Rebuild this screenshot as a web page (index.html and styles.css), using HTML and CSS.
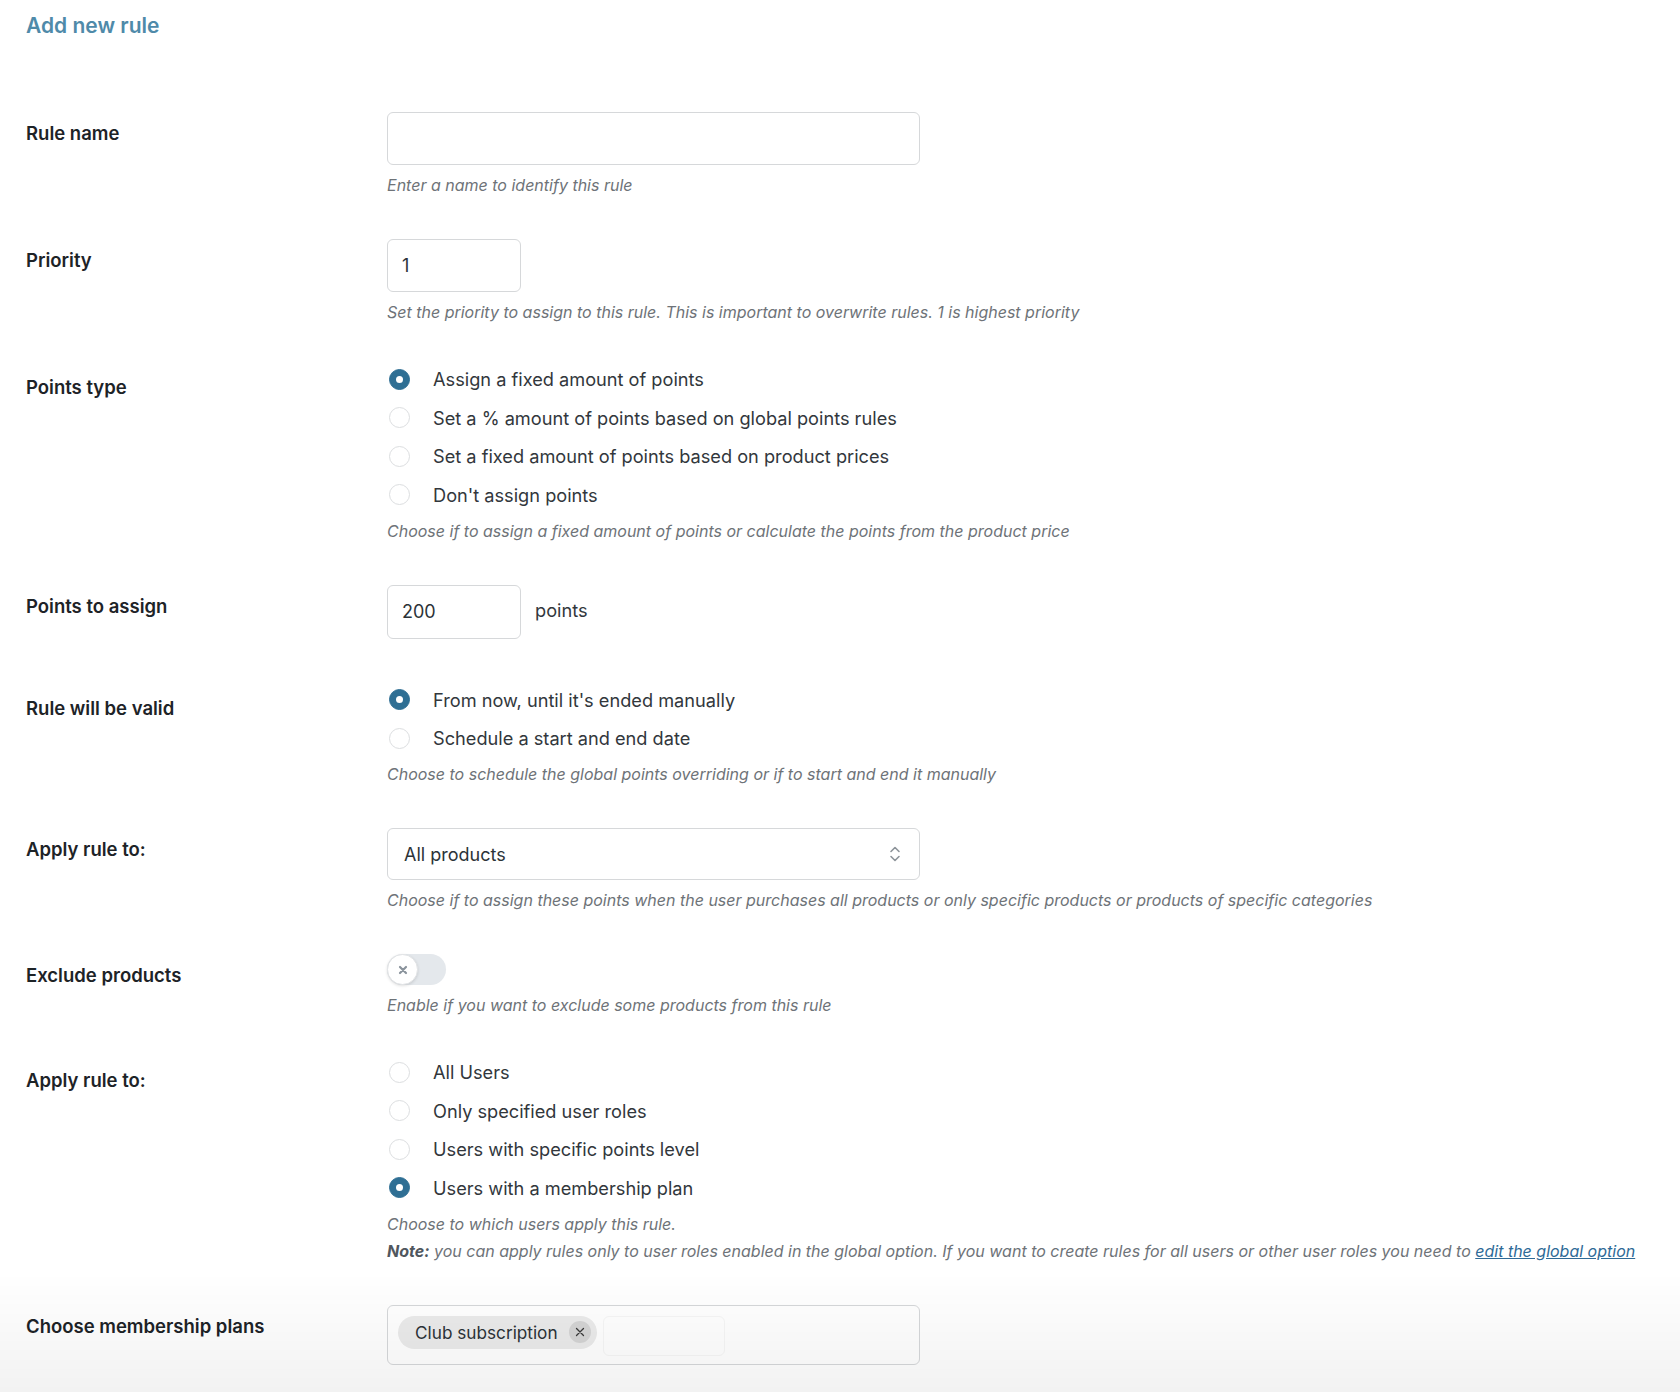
FILE: index.html
```html
<!DOCTYPE html>
<html lang="en">
<head>
<meta charset="utf-8">
<title>Add new rule</title>
<link rel="stylesheet" href="styles.css">
</head>
<body>
<div class="page">
  <h1 class="title">Add new rule</h1>

  <div class="form">
    <div class="row">
      <div class="label">Rule name</div>
      <div class="field">
        <div class="input wide"></div>
        <p class="help">Enter a name to identify this rule</p>
      </div>
    </div>

    <div class="row">
      <div class="label">Priority</div>
      <div class="field">
        <div class="input small">1</div>
        <p class="help">Set the priority to assign to this rule. This is important to overwrite rules. 1 is highest priority</p>
      </div>
    </div>

    <div class="row">
      <div class="label">Points type</div>
      <div class="field">
        <ul class="radios">
          <li class="radio-item"><span class="radio checked"></span>Assign a fixed amount of points</li>
          <li class="radio-item"><span class="radio"></span>Set a % amount of points based on global points rules</li>
          <li class="radio-item"><span class="radio"></span>Set a fixed amount of points based on product prices</li>
          <li class="radio-item"><span class="radio"></span>Don't assign points</li>
        </ul>
        <p class="help help-after-radios">Choose if to assign a fixed amount of points or calculate the points from the product price</p>
      </div>
    </div>

    <div class="row">
      <div class="label">Points to assign</div>
      <div class="field">
        <div class="inline">
          <div class="input small">200</div>
          <span class="suffix">points</span>
        </div>
      </div>
    </div>

    <div class="row">
      <div class="label">Rule will be valid</div>
      <div class="field">
        <ul class="radios">
          <li class="radio-item"><span class="radio checked"></span>From now, until it's ended manually</li>
          <li class="radio-item"><span class="radio"></span>Schedule a start and end date</li>
        </ul>
        <p class="help help-after-radios">Choose to schedule the global points overriding or if to start and end it manually</p>
      </div>
    </div>

    <div class="row">
      <div class="label">Apply rule to:</div>
      <div class="field">
        <div class="input wide select">
          <span>All products</span>
          <svg class="select-arrows" width="12" height="18" viewBox="0 0 12 18" aria-hidden="true">
            <path d="M2 6.5 L6 2.5 L10 6.5" fill="none" stroke="#8c9399" stroke-width="1.6" stroke-linecap="round" stroke-linejoin="round"/>
            <path d="M2 11.5 L6 15.5 L10 11.5" fill="none" stroke="#8c9399" stroke-width="1.6" stroke-linecap="round" stroke-linejoin="round"/>
          </svg>
        </div>
        <p class="help">Choose if to assign these points when the user purchases all products or only specific products or products of specific categories</p>
      </div>
    </div>

    <div class="row">
      <div class="label">Exclude products</div>
      <div class="field">
        <div class="toggle">
          <span class="knob">
            <svg width="10" height="10" viewBox="0 0 10 10" aria-hidden="true">
              <path d="M2 2 L8 8 M8 2 L2 8" stroke="#8a939c" stroke-width="2.2" stroke-linecap="round"/>
            </svg>
          </span>
        </div>
        <p class="help">Enable if you want to exclude some products from this rule</p>
      </div>
    </div>

    <div class="row">
      <div class="label">Apply rule to:</div>
      <div class="field">
        <ul class="radios">
          <li class="radio-item"><span class="radio"></span>All Users</li>
          <li class="radio-item"><span class="radio"></span>Only specified user roles</li>
          <li class="radio-item"><span class="radio"></span>Users with specific points level</li>
          <li class="radio-item"><span class="radio checked"></span>Users with a membership plan</li>
        </ul>
        <p class="help help-after-radios">Choose to which users apply this rule.</p>
        <p class="help help-note"><b>Note:</b> you can apply rules only to user roles enabled in the global option. If you want to create rules for all users or other user roles you need to <a href="#" class="link">edit the global option</a></p>
      </div>
    </div>

    <div class="row">
      <div class="label">Choose membership plans</div>
      <div class="field">
        <div class="input wide multi">
          <span class="chip">Club subscription<span class="chip-x">
            <svg width="10" height="10" viewBox="0 0 10 10" aria-hidden="true">
              <path d="M1.5 1.5 L8.5 8.5 M8.5 1.5 L1.5 8.5" stroke="#3a3a3a" stroke-width="1.3" stroke-linecap="round"/>
            </svg>
          </span></span>
          <span class="search"></span>
        </div>
      </div>
    </div>
  </div>
</div>
<div class="bottom-fade"></div>
</body>
</html>
```

FILE: styles.css
```css
* { box-sizing: border-box; }

html, body {
  margin: 0;
  padding: 0;
  background: #ffffff;
}

body {
  font-family: Inter, "Noto Sans", "Liberation Sans", sans-serif;
  color: #2c3338;
  min-height: 1392px;
}

.page {
  padding: 13px 26px 0 26px;
}

.title {
  margin: 0;
  font-size: 21px;
  line-height: 26px;
  font-weight: 600;
  color: #4f8aa9;
}

.form {
  margin-top: 73px;
}

.row {
  display: flex;
  align-items: flex-start;
  margin-bottom: 44px;
}

.label {
  width: 361px;
  flex: none;
  padding-top: 10px;
  font-size: 18.5px;
  line-height: 22px;
  font-weight: 600;
  color: #1d2327;
}

.field {
  flex: 1;
}

.input {
  height: 53px;
  border: 1px solid #d6d8da;
  border-radius: 6px;
  background: #fff;
  font-size: 18px;
  color: #2c3338;
  display: flex;
  align-items: center;
  padding: 0 14px;
}

.input.wide { width: 533px; }
.input.small { width: 134px; }

.help {
  margin: 10px 0 0 0;
  font-size: 16px;
  line-height: 20px;
  font-style: italic;
  color: #6e7378;
}

.help-after-radios { margin-top: 12px; }
.help-note { margin-top: 7px; }
.help b { font-weight: 700; color: #50575e; }

.link {
  color: #2e6a97;
  text-decoration: underline;
}

.radios {
  list-style: none;
  margin: -1px 0 0 0;
  padding: 0;
  display: flex;
  flex-direction: column;
  gap: 10.5px;
}

.radio-item {
  display: flex;
  align-items: center;
  height: 28px;
  font-size: 18.2px;
  color: #32373c;
  padding-left: 2px;
}

.radio {
  width: 21px;
  height: 21px;
  border-radius: 50%;
  border: 1px solid #dcdee0;
  background: #fff;
  margin-right: 23px;
  flex: none;
  display: flex;
  align-items: center;
  justify-content: center;
}

.radio.checked {
  background: #2f6f94;
  border-color: #2f6f94;
}

.radio.checked::after {
  content: "";
  width: 7px;
  height: 7px;
  border-radius: 50%;
  background: #fff;
}

.inline {
  display: flex;
  align-items: center;
  margin-bottom: 4px;
}

.inline .input { height: 54px; }

.suffix {
  margin-left: 14px;
  font-size: 18.2px;
  color: #32373c;
  padding-bottom: 3px;
}

.select {
  height: 52px;
  justify-content: space-between;
  padding-left: 16px;
  padding-right: 18px;
}

.select-arrows { display: block; }

.toggle {
  width: 59px;
  height: 31px;
  border-radius: 16px;
  background: #e4e8ec;
  display: flex;
  align-items: center;
}

.knob {
  width: 31px;
  height: 31px;
  border-radius: 50%;
  background: #fff;
  border: 1px solid #e2e4e6;
  box-shadow: 0 1px 3px rgba(0, 0, 0, 0.12);
  display: flex;
  align-items: center;
  justify-content: center;
}

.multi {
  height: 60px;
  padding: 10px 10px 0 10px;
  gap: 6px;
  align-items: flex-start;
}

.chip {
  display: inline-flex;
  align-items: center;
  height: 33px;
  padding: 0 6px 0 17px;
  border-radius: 17px;
  background: #ebebeb;
  font-size: 17.2px;
  color: #2c3338;
}

.chip-x {
  width: 22px;
  height: 22px;
  border-radius: 50%;
  background: #d4d4d4;
  margin-left: 11px;
  display: flex;
  align-items: center;
  justify-content: center;
}

.search {
  width: 122px;
  height: 40px;
  border: 1px solid #f6f6f6;
  border-radius: 6px;
}

.bottom-fade {
  position: fixed;
  left: 0;
  right: 0;
  bottom: 0;
  height: 120px;
  pointer-events: none;
  background: linear-gradient(to bottom, rgba(0, 0, 0, 0) 0%, rgba(0, 0, 0, 0.05) 100%);
}
```
